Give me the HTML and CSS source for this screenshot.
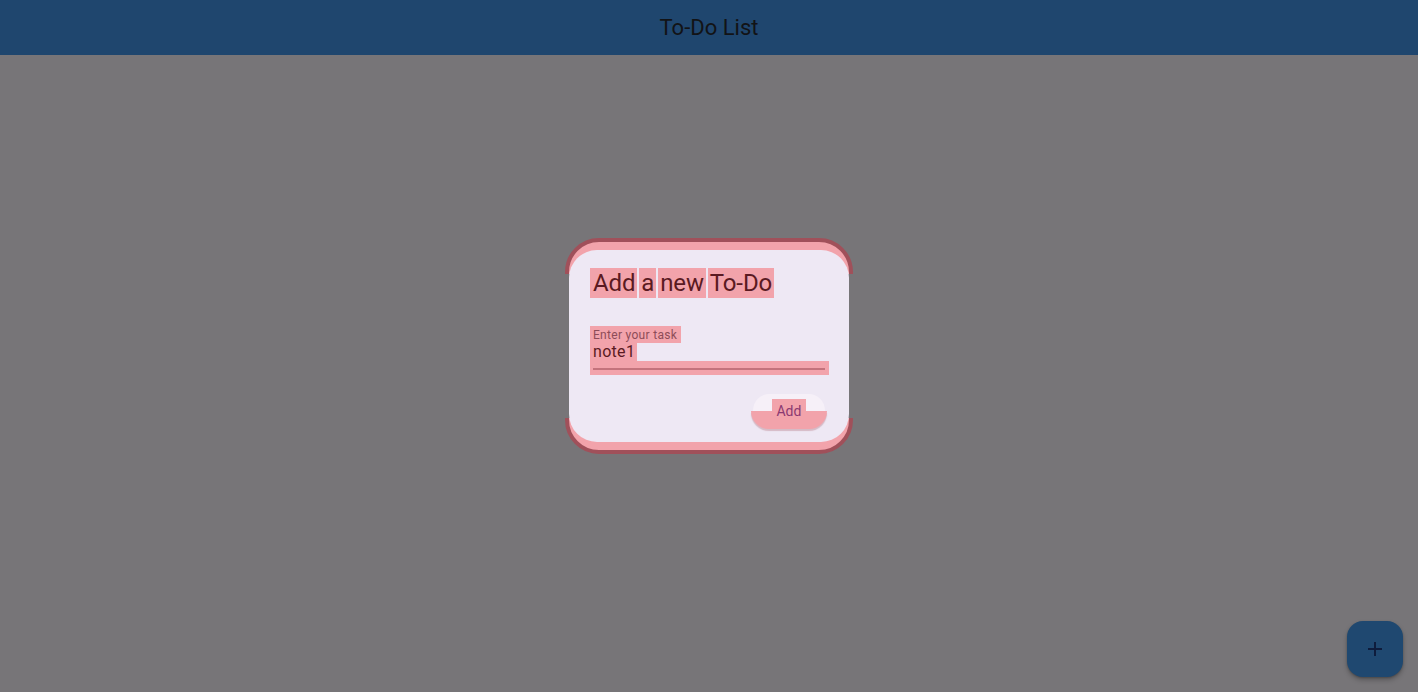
FILE: index.html
```html
<!DOCTYPE html>
<html lang="en">
<head>
<meta charset="utf-8">
<title>To-Do List</title>
<link rel="stylesheet" href="styles.css">
</head>
<body>
<div class="app">
  <header class="appbar"><h1 class="appbar-title">To-Do List</h1></header>
  <main class="content"></main>
  <button class="fab" aria-label="Add">
    <svg width="16" height="16" viewBox="0 0 16 16"><path d="M8 1v14M1 8h14" stroke="#0e1c3c" stroke-width="2" fill="none"/></svg>
  </button>
  <div class="scrim">
    <div class="dialog-wrap">
      <div class="dbg dbg-top"><div class="dbg-shape"></div></div>
      <div class="dbg dbg-bottom"><div class="dbg-shape"></div></div>
      <div class="dialog">
        <h2 class="dialog-title"><span class="hl">Add</span> <span class="hl">a</span> <span class="hl">new</span> <span class="hl">To-Do</span></h2>
        <div class="field">
          <div class="field-label"><span class="hl hl-label">Enter your task</span></div>
          <div class="field-value"><span class="hl hl-value">note1</span></div>
          <div class="field-line-box"><div class="field-line"></div></div>
        </div>
        <div class="actions">
          <button class="btn">
            <span class="btn-pink"></span>
            <span class="btn-label">Add</span>
          </button>
        </div>
      </div>
    </div>
  </div>
</div>
</body>
</html>
```

FILE: styles.css
```css
* { box-sizing: border-box; }
html, body { margin: 0; padding: 0; }
body {
  font-family: Roboto, "Noto Sans", sans-serif;
  width: 1418px;
  height: 692px;
  overflow: hidden;
  background: #777578;
}
.app {
  position: relative;
  width: 1418px;
  height: 692px;
  display: flex;
  flex-direction: column;
}
.appbar {
  height: 55px;
  background: #1f466e;
  display: flex;
  align-items: center;
  justify-content: center;
}
.appbar-title {
  margin: 0;
  font-size: 22px;
  font-weight: 400;
  color: #121316;
  line-height: 28px;
}
.content { flex: 1; }
.fab {
  position: absolute;
  right: 15px;
  bottom: 15px;
  width: 56px;
  height: 56px;
  border: none;
  border-radius: 16px;
  background: #1f4870;
  box-shadow: 0 3px 5px rgba(0,0,0,0.25), 0 1px 2px rgba(0,0,0,0.2);
  display: flex;
  align-items: center;
  justify-content: center;
  padding: 0;
}
.scrim {
  position: absolute;
  inset: 0;
  display: flex;
  align-items: center;
  justify-content: center;
}
.dialog-wrap {
  position: relative;
  width: 288px;
  height: 216px;
  padding: 12px 4px;
}
.dbg {
  position: absolute;
  left: 0;
  width: 288px;
  height: 36px;
  overflow: hidden;
}
.dbg-top { top: 0; }
.dbg-bottom { bottom: 0; }
.dbg-shape {
  position: absolute;
  left: 0;
  width: 288px;
  height: 216px;
  border: 4px solid #a0505a;
  border-radius: 34px;
  background: #f2a3ab;
}
.dbg-top .dbg-shape { top: 0; }
.dbg-bottom .dbg-shape { bottom: 0; }
.dialog {
  position: relative;
  width: 280px;
  height: 192px;
  background: #eee8f4;
  border-radius: 28px;
  padding: 18px 24px 0 24px;
  display: flex;
  flex-direction: column;
}
.hl { background: #f2a3ab; }
.dialog-title {
  margin: 0;
  font-size: 24px;
  font-weight: 400;
  line-height: 30px;
  color: #5a1a22;
  white-space: nowrap;
  letter-spacing: -0.1px;
}
.dialog-title .hl {
  display: inline-block;
  padding: 0 2px;
  margin: 0 -2px;
}
.dialog-title .hl:first-child { margin-left: -3px; padding-left: 3px; }
.field {
  margin-top: 28px;
  margin-left: -3px;
  width: 239px;
}
.field-label {
  height: 17px;
  line-height: 19px;
  font-size: 12px;
}
.hl-label {
  display: inline-block;
  height: 17px;
  padding: 0 4px 0 3px;
  color: #8d4c58;
  letter-spacing: 0.3px;
}
.field-value {
  height: 18px;
  line-height: 18px;
  font-size: 16px;
}
.hl-value {
  display: inline-block;
  height: 18px;
  padding: 0 2px 0 3px;
  color: #5a1a22;
  letter-spacing: 0.3px;
}
.field-line-box {
  height: 14px;
  background: #f2a3ab;
  padding: 7px 4px 0 3px;
}
.field-line {
  height: 2px;
  background: #c4737c;
}
.actions {
  display: flex;
  justify-content: flex-end;
  margin-top: 19px;
  margin-right: 0;
}
.btn {
  position: relative;
  width: 72px;
  height: 33px;
  border: none;
  padding: 0;
  border-radius: 17px;
  background: #f6f0f8;
  font-family: Roboto, "Noto Sans", sans-serif;
  overflow: visible;
}
.btn-pink {
  position: absolute;
  left: -2px;
  right: -2px;
  top: 17px;
  height: 18px;
  background: #f2a3ab;
  border-radius: 0 0 18px 18px;
  box-shadow: 0 2px 1px rgba(160, 80, 90, 0.3);
}
.btn-label {
  position: relative;
  display: inline-block;
  background: #f2a3ab;
  font-size: 14px;
  color: #8b3a72;
  padding: 4px 4px 4px 4px;
  line-height: 16px;
  letter-spacing: 0.1px;
}
```
